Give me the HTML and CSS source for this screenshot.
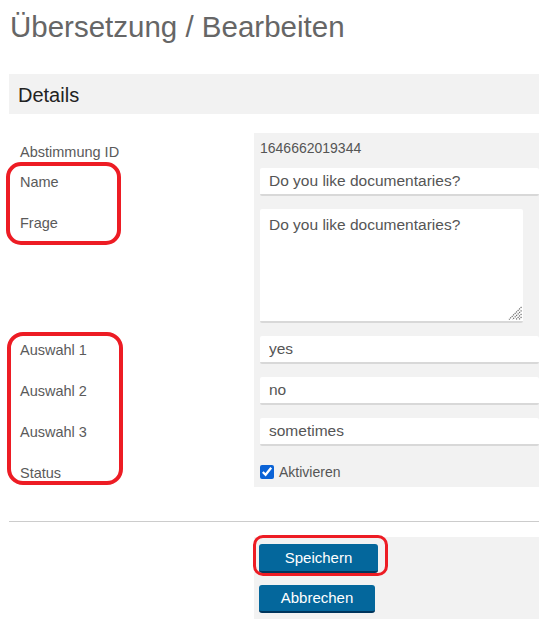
FILE: index.html
```html
<!DOCTYPE html>
<html lang="de">
<head>
<meta charset="utf-8">
<title>Übersetzung / Bearbeiten</title>
<link rel="stylesheet" href="styles.css">
</head>
<body>
<div class="page">
  <h1 class="title">Übersetzung / Bearbeiten</h1>
  <div class="section-bar">Details</div>

  <div class="form">
    <div class="label label-id">Abstimmung ID</div>
    <div class="cell cell-id">1646662019344</div>

    <div class="label">Name</div>
    <div class="cell cell-field"><input class="text-input" type="text" value="Do you like documentaries?"></div>

    <div class="label label-top">Frage</div>
    <div class="cell cell-field">
      <div class="area-wrap">
        <textarea class="text-area">Do you like documentaries?</textarea>
        <svg class="grip" width="14" height="14" viewBox="0 0 14 14" aria-hidden="true">
          <g stroke="#6a6a6a" stroke-width="1.2" stroke-dasharray="1.2 0.9">
            <line x1="13.5" y1="1" x2="1" y2="13.5"/>
            <line x1="13.5" y1="4.5" x2="4.5" y2="13.5"/>
            <line x1="13.5" y1="8" x2="8" y2="13.5"/>
            <line x1="13.5" y1="11" x2="11" y2="13.5"/>
          </g>
        </svg>
      </div>
    </div>

    <div class="label">Auswahl 1</div>
    <div class="cell cell-field"><input class="text-input" type="text" value="yes"></div>

    <div class="label">Auswahl 2</div>
    <div class="cell cell-field"><input class="text-input" type="text" value="no"></div>

    <div class="label">Auswahl 3</div>
    <div class="cell cell-field"><input class="text-input" type="text" value="sometimes"></div>

    <div class="label label-status">Status</div>
    <div class="cell cell-status"><label class="check"><input class="check-box" type="checkbox" checked><span>Aktivieren</span></label></div>
  </div>

  <hr class="divider">

  <div class="actions">
    <div class="actions-spacer"></div>
    <div class="actions-panel">
      <button class="btn btn-save" type="button">Speichern</button>
      <button class="btn btn-cancel" type="button">Abbrechen</button>
    </div>
  </div>

  <div class="mark mark-1"></div>
  <div class="mark mark-2"></div>
  <div class="mark mark-3"></div>
</div>
</body>
</html>
```
FILE: styles.css
```css
html, body {
  margin: 0;
  padding: 0;
  background: #ffffff;
}
body {
  font-family: "Liberation Sans", Arial, sans-serif;
  color: #555555;
  overflow: hidden;
}
.page {
  position: relative;
  padding-left: 9px;
  width: 530px;
  height: 626px;
}
.title {
  margin: 0;
  padding-top: 10px;
  padding-left: 1px;
  font-size: 29.5px;
  line-height: 34px;
  font-weight: normal;
  color: #666666;
}
.section-bar {
  margin-top: 30px;
  height: 40px;
  box-sizing: border-box;
  padding: 2px 0 0 9px;
  line-height: 38px;
  font-size: 20px;
  color: #222222;
  background: #f2f2f2;
}
.form {
  margin-top: 19px;
  display: grid;
  grid-template-columns: 245px 1fr;
}
.label {
  padding-left: 11px;
  font-size: 14.5px;
  line-height: 18px;
  color: #5a5a5a;
  align-self: center;
}
.label-id {
  padding-top: 10px;
}
.label-top {
  align-self: start;
  padding-top: 12px;
}
.label-status {
  padding-top: 6px;
}
.cell {
  background: #f2f2f2;
  padding-left: 6px;
}
.cell-id {
  padding-top: 5px;
  padding-bottom: 3px;
  font-size: 14px;
  line-height: 20px;
  color: #555555;
}
.cell-field {
  padding-top: 7px;
  padding-bottom: 6px;
}
.cell-status {
  padding-top: 10px;
  padding-bottom: 5px;
  line-height: 20px;
}
.text-input,
.text-area {
  display: block;
  box-sizing: border-box;
  margin: 0;
  border: 0;
  border-bottom: 2px solid #d8d8d8;
  border-radius: 2px;
  background: #ffffff;
  font-family: "Liberation Sans", Arial, sans-serif;
  font-size: 15.5px;
  color: #555555;
  outline: none;
}
.text-input {
  width: 100%;
  height: 28px;
  padding: 0 9px;
}
.area-wrap {
  position: relative;
  width: 263px;
}
.text-area {
  width: 263px;
  height: 114px;
  padding: 6px 9px;
  line-height: 20px;
  resize: none;
}
.grip {
  position: absolute;
  right: 1px;
  bottom: 3px;
  display: block;
}
.check {
  display: flex;
  align-items: center;
  font-size: 14px;
  color: #555555;
}
.check-box {
  width: 14px;
  height: 14px;
  margin: 0 5px 0 0;
  accent-color: #0b63d6;
}
.divider {
  margin: 34px 0 0 0;
  border: 0;
  border-top: 1px solid #cccccc;
  height: 0;
}
.actions {
  margin-top: 15px;
  display: flex;
}
.actions-spacer {
  width: 245px;
}
.actions-panel {
  flex: 1;
  background: #f2f2f2;
  padding: 7px 0 6px 5px;
  display: flex;
  flex-direction: column;
  align-items: flex-start;
  gap: 12px;
}
.btn {
  box-sizing: border-box;
  height: 28px;
  border: 0;
  border-bottom: 2px solid #00355c;
  border-radius: 3px;
  background: #04679c;
  color: #ffffff;
  font-family: "Liberation Sans", Arial, sans-serif;
  font-size: 15px;
  line-height: 26px;
  padding: 0;
  text-align: center;
}
.btn-save {
  width: 119px;
  height: 29px;
}
.btn-cancel {
  width: 116px;
}
.mark {
  position: absolute;
  box-sizing: border-box;
  border: 4px solid #ed1c24;
}
.mark-1 {
  left: 6px;
  top: 162px;
  width: 115px;
  height: 83px;
  border-radius: 15px;
}
.mark-2 {
  left: 7px;
  top: 332px;
  width: 116px;
  height: 153px;
  border-radius: 16px;
}
.mark-3 {
  left: 253px;
  top: 535px;
  width: 135px;
  height: 41px;
  border-width: 3.5px;
  border-radius: 10px;
}
```
